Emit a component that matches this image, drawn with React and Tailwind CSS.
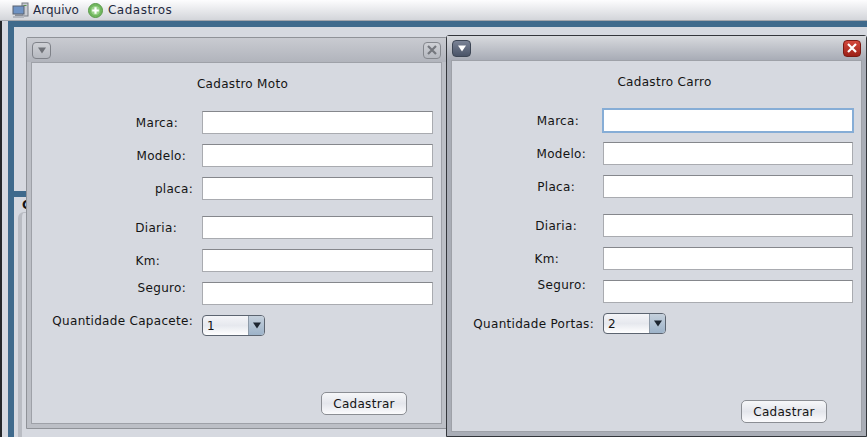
const FONT = 'font-["DejaVu_Sans",sans-serif]';

const MOTO_ROWS = [
  { label: 'Marca:', pad: 'pr-[24px]', top: 'mt-0' },
  { label: 'Modelo:', pad: 'pr-[16px]', top: 'mt-[10px]' },
  { label: 'placa:', pad: 'pr-[9px]', top: 'mt-[10px]' },
  { label: 'Diaria:', pad: 'pr-[25px]', top: 'mt-[16px]' },
  { label: 'Km:', pad: 'pr-[42px]', top: 'mt-[10px]' },
  { label: 'Seguro:', pad: 'pr-[16px]', top: 'mt-[10px]', shift: 'self-start -mt-[1px]' },
];

const CARRO_ROWS = [
  { label: 'Marca:', pad: 'pr-[24px]', top: 'mt-0', focus: true },
  { label: 'Modelo:', pad: 'pr-[17px]', top: 'mt-[10px]' },
  { label: 'Placa:', pad: 'pr-[28px]', top: 'mt-[10px]' },
  { label: 'Diaria:', pad: 'pr-[26px]', top: 'mt-[16px]' },
  { label: 'Km:', pad: 'pr-[44px]', top: 'mt-[10px]' },
  { label: 'Seguro:', pad: 'pr-[17px]', top: 'mt-[10px]', shift: 'self-start -mt-[2px]' },
];

const Triangle = ({ fill }) => (
  <svg width="10" height="7" viewBox="0 0 10 7">
    <path d="M1 0.5h8L5 6.5z" fill={fill} />
  </svg>
);

const Field = ({ row, labelWidth, fieldWidth }) => (
  <div className={`flex items-center ${row.top}`}>
    <span className={`text-right shrink-0 text-[12px] leading-[14px] text-[#141414] ${labelWidth} ${row.pad} ${row.shift || ''}`}>
      {row.label}
    </span>
    <input
      readOnly
      className={`h-[23px] bg-white border outline-none ${fieldWidth} ${
        row.focus ? 'border-[#86add6] ring-1 ring-[#86add6]' : 'border-[#a9abb0] border-t-[#85878c]'
      }`}
    />
  </div>
);

const Combo = ({ value }) => (
  <div className="w-[63px] h-[21px] flex rounded-[4px] border border-[#5c6470] overflow-hidden bg-gradient-to-b from-[#f4f5f8] via-[#e6e8ee] to-[#ffffff]">
    <span className="flex-1 pl-[4px] text-[12px] leading-[20px] text-[#141414]">{value}</span>
    <span className="w-[16px] flex items-center justify-center border-l border-[#8d9aa8] bg-gradient-to-b from-[#c5d0dc] to-[#9db3c9]">
      <Triangle fill="#1c2530" />
    </span>
  </div>
);

const InternalFrame = ({ active, title, titlePad, rows, labelWidth, labelClass, fieldWidth, comboLabel, comboValue, buttonGap, position }) => (
  <div
    className={`absolute ${position} flex flex-col border ${
      active ? 'border-[#33363b] rounded-t-[3px] bg-[#a9adb6]' : 'border-[#8f9298] rounded-t-[2px] bg-[#bcbfc6]'
    }`}
  >
    {/* Title bar */}
    <div
      className={`h-[24px] shrink-0 flex items-center justify-between pl-[5px] pr-[5px] bg-gradient-to-b ${
        active ? 'from-[#d8dade] to-[#a8acb6]' : 'from-[#c9cbd1] to-[#b1b4bc]'
      }`}
    >
      <div
        className={`w-[19px] h-[17px] rounded-[4px] flex items-center justify-center border ${
          active ? 'border-[#3d4655] bg-gradient-to-b from-[#7a8396] to-[#4a5468]' : 'border-[#7f8289] bg-gradient-to-b from-[#cfd1d6] to-[#b6b9c0]'
        }`}
      >
        <Triangle fill={active ? '#ffffff' : '#6f7278'} />
      </div>
      <div
        className={`w-[18px] h-[17px] rounded-[4px] flex items-center justify-center border ${
          active ? 'border-[#7a1a14] bg-gradient-to-b from-[#d4483c] to-[#9c1f17]' : 'border-[#85888e] bg-gradient-to-b from-[#cfd1d6] to-[#b6b9c0]'
        }`}
      >
        <svg width="10" height="10" viewBox="0 0 10 10">
          <path d="M1 1l8 8M9 1l-8 8" stroke={active ? '#ffffff' : '#75787e'} strokeWidth="2.2" />
        </svg>
      </div>
    </div>

    {/* Content */}
    <div className="flex-1 mx-[4px] mb-[4px] bg-[#d6d9e0] border border-[#9ea1a8]">
      <div className={`h-[48px] ${titlePad} pt-[14px] text-center text-[12px] leading-[14px] text-[#141414]`}>{title}</div>
      {rows.map((row) => (
        <Field key={row.label} row={row} labelWidth={labelWidth} fieldWidth={fieldWidth} />
      ))}
      <div className="flex items-center mt-[10px]">
        <span className={`text-right shrink-0 pr-[9px] text-[12px] leading-[14px] text-[#141414] ${labelWidth} ${labelClass}`}>
          {comboLabel}
        </span>
        <Combo value={comboValue} />
      </div>
      <button className={`block ml-[289px] w-[86px] h-[23px] rounded-[5px] border border-[#8b8e94] bg-gradient-to-b from-[#f6f7f9] via-[#e4e6ec] to-[#fbfbfd] text-[12px] text-[#141414] ${buttonGap}`}>
        Cadastrar
      </button>
    </div>
  </div>
);

export default function App() {
  return (
    <div className={`relative w-[867px] h-[437px] overflow-hidden flex flex-col bg-[#d6d9e0] tracking-[0.3px] ${FONT}`}>
      {/* Menu bar */}
      <div className="h-[21px] shrink-0 flex items-center pl-[12px] bg-gradient-to-b from-[#fdfdfe] to-[#d3d5da] border-b border-[#a2a5ab] text-[12px] text-[#1f2a40]">
        <svg width="17" height="17" viewBox="0 0 17 17" className="mr-[4px]">
          <rect x="10" y="1" width="6" height="13" fill="#c9ccd2" stroke="#777c85" />
          <rect x="11.5" y="3" width="3" height="1" fill="#5b9b4a" />
          <rect x="1" y="4" width="11" height="8" fill="#6f93c4" stroke="#5a6270" />
          <rect x="3" y="12" width="7" height="2" fill="#8a8f98" />
          <rect x="1" y="14" width="11" height="2" fill="#b3b7bf" />
        </svg>
        <span className="mr-[9px] tracking-normal">Arquivo</span>
        <svg width="15" height="15" viewBox="0 0 15 15" className="mr-[5px]">
          <circle cx="7.5" cy="7.5" r="7" fill="#72b85f" stroke="#5a9a4a" />
          <circle cx="7.5" cy="7.5" r="4.5" fill="#9ad28a" />
          <path d="M7.5 4.2v6.6M4.2 7.5h6.6" stroke="#ffffff" strokeWidth="2.2" />
        </svg>
        <span className="tracking-[0.5px]">Cadastros</span>
      </div>

      {/* Main window body */}
      <div className="flex-1 flex min-h-0">
        <div className="w-[2px] bg-[#25272a]" />
        <div className="w-[6px] bg-[#d6d9e0]" />
        <div className="flex-1 flex flex-col border-l-[6px] border-t-[6px] border-[#3f6a8c]">
          <div className="h-[164px] shrink-0" />
          <div className="h-[6px] shrink-0 bg-[#3f6a8c]" />
          <div className="pl-[8px] h-[15px] shrink-0 text-[12px] font-bold leading-[17px] text-[#141414]">Cadastros</div>
          <div className="flex-1 ml-[4px] rounded-tl-[6px] border-l-[4px] border-t border-[#b9bcc3] bg-[#d6d9e0]" />
        </div>
      </div>

      <InternalFrame
        position="left-[26px] top-[37px] w-[421px] h-[392px]"
        title="Cadastro Moto"
        titlePad="pl-[12px]"
        rows={MOTO_ROWS}
        labelWidth="w-[170px]"
        labelClass="self-start -mt-[1px]"
        fieldWidth="w-[231px]"
        comboLabel="Quantidade Capacete:"
        comboValue="1"
        buttonGap="mt-[56px]"
      />
      <InternalFrame
        active
        position="left-[446px] top-[35px] w-[421px] h-[402px]"
        title="Cadastro Carro"
        titlePad="pl-[16px]"
        rows={CARRO_ROWS}
        labelWidth="w-[151px]"
        labelClass=""
        fieldWidth="w-[250px]"
        comboLabel="Quantidade Portas:"
        comboValue="2"
        buttonGap="mt-[66px]"
      />
    </div>
  );
}
